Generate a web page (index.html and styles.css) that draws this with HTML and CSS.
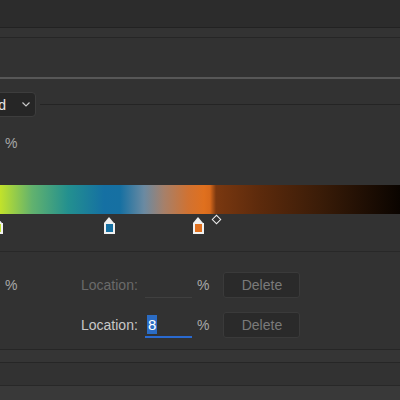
FILE: index.html
```html
<!DOCTYPE html>
<html lang="en">
<head>
    <meta charset="UTF-8">
    <title>Gradient Editor</title>
    <link rel="stylesheet" href="styles.css">
</head>
<body>
    <div class="window">
        <div class="title-bar"></div>
        <div class="tab-strip"></div>
        <div class="presets"></div>

        <div class="editor">
            <div class="type-row">
                <div class="select">
                    <span class="select-text">Solid</span>
                    <svg class="chevron" width="8" height="5" viewBox="0 0 8 5">
                        <path d="M0.5 0.5 L4 4 L7.5 0.5" fill="none" stroke="#c8c8c8" stroke-width="1.2"/>
                    </svg>
                </div>
                <div class="rule"></div>
            </div>

            <div class="smooth-row">
                <span class="unit">%</span>
            </div>

            <div class="gradient"></div>

            <div class="stops">
                <div class="stop" style="left: -8px;"><span class="swatch" style="background: #bfe02c;"></span></div>
                <div class="stop" style="left: 104px;"><span class="swatch" style="background: #1670a2;"></span></div>
                <div class="stop" style="left: 193px;"><span class="swatch" style="background: #e0701e;"></span></div>
                <div class="midpoint" style="left: 213px;"></div>
            </div>

            <div class="stop-fields">
                <div class="field-row">
                    <span class="unit">%</span>
                    <span class="label disabled">Location:</span>
                    <span class="input"></span>
                    <span class="unit">%</span>
                    <button class="btn">Delete</button>
                </div>
                <div class="field-row">
                    <span class="unit hidden">%</span>
                    <span class="label">Location:</span>
                    <span class="input active"><span class="selected">8</span></span>
                    <span class="unit">%</span>
                    <button class="btn">Delete</button>
                </div>
            </div>
        </div>

        <div class="footer-band"></div>
        <div class="footer-panel"></div>
        <div class="footer-bottom"></div>
    </div>
</body>
</html>
```

FILE: styles.css
```css
body {
    margin: 0;
    width: 400px;
    height: 400px;
    overflow: hidden;
    background: #323232;
    font-family: 'Liberation Sans', Arial, sans-serif;
    font-size: 14px;
    color: #c8c8c8;
}

.window {
    display: flex;
    flex-direction: column;
    height: 400px;
}

.title-bar {
    height: 27px;
    background: #2c2c2c;
    border-bottom: 1px solid #222222;
}

.tab-strip {
    height: 9px;
    background: #333333;
    border-bottom: 1px solid #262626;
}

.presets {
    height: 39px;
    background: #323232;
    border-bottom: 2px solid #575757;
}

.editor {
    height: 270px;
    background: #323232;
    border-bottom: 1px solid #262626;
}

.type-row {
    display: flex;
    align-items: center;
    margin-top: 13px;
    height: 25px;
}

.select {
    display: flex;
    align-items: center;
    justify-content: space-between;
    box-sizing: border-box;
    width: 67px;
    height: 25px;
    margin-left: -31px;
    padding: 0 5px 0 5px;
    background: #262626;
    border: 1px solid #3d3d3d;
    border-radius: 4px;
    color: #e6e6e6;
    font-size: 14px;
}

.rule {
    flex: 1;
    height: 1px;
    margin-left: 4px;
    background: #242424;
}

.smooth-row {
    height: 20px;
    margin-top: 16px;
    padding-left: 5px;
    display: flex;
    align-items: center;
}

.unit {
    color: #a8a8a8;
    font-size: 14px;
}

.hidden {
    visibility: hidden;
}

.gradient {
    height: 29px;
    margin-top: 32px;
    background: linear-gradient(to right,
        #c2e22a 0%,
        #62b26e 8%,
        #23908f 17%,
        #1570a3 26%,
        #1670a2 30%,
        #6a8aa2 36%,
        #a6806a 41%,
        #d07232 47%,
        #e0701e 51%,
        #d86a1c 52.5%,
        #7a3810 54%,
        #5c2a0c 65%,
        #3a1c08 80%,
        #0a0400 100%);
}

.stops {
    position: relative;
    height: 22px;
}

.stop {
    position: absolute;
    top: 3px;
    width: 11px;
    height: 18px;
}

.stop::before {
    content: '';
    position: absolute;
    top: 0;
    left: 0;
    border-left: 5.5px solid transparent;
    border-right: 5.5px solid transparent;
    border-bottom: 6px solid #f0f0f0;
}

.swatch {
    position: absolute;
    top: 6px;
    left: 0;
    box-sizing: border-box;
    width: 11px;
    height: 11px;
    border: 2px solid #f0f0f0;
    border-top-width: 1px;
}

.midpoint {
    position: absolute;
    top: 2px;
    width: 5px;
    height: 5px;
    border: 1.5px solid #f0f0f0;
    transform: rotate(45deg);
}

.stop-fields {
    margin-top: 15px;
    border-top: 1px solid #282828;
    padding-top: 20px;
    display: flex;
    flex-direction: column;
    gap: 14px;
}

.field-row {
    display: flex;
    align-items: center;
    height: 26px;
    padding-left: 5px;
}

.field-row .unit:first-child {
    width: 76px;
}

.label {
    color: #c8c8c8;
    width: 64px;
}

.label.disabled {
    color: #6a6a6a;
}

.input {
    box-sizing: border-box;
    width: 47px;
    height: 26px;
    margin-right: 5px;
    padding: 3px 2px 0;
    border-bottom: 1px solid #404040;
    color: #ffffff;
    font-size: 15px;
}

.input.active {
    border-bottom: 2px solid #2a6ad0;
}

.selected {
    display: inline-block;
    background: #2b6cc4;
    line-height: 19px;
    padding: 0 1px;
}

.btn {
    margin-left: 14px;
    width: 77px;
    height: 26px;
    background: #2a2a2a;
    border: 1px solid #3a3a3a;
    border-radius: 3px;
    color: #7a7a7a;
    font-family: 'Liberation Sans', Arial, sans-serif;
    font-size: 14px;
    padding: 0;
}

.footer-band {
    height: 12px;
    background: #353535;
    border-bottom: 1px solid #262626;
}

.footer-panel {
    height: 22px;
    background: #323232;
    border-bottom: 1px solid #282828;
}

.footer-bottom {
    flex: 1;
    background: #393939;
}
```
